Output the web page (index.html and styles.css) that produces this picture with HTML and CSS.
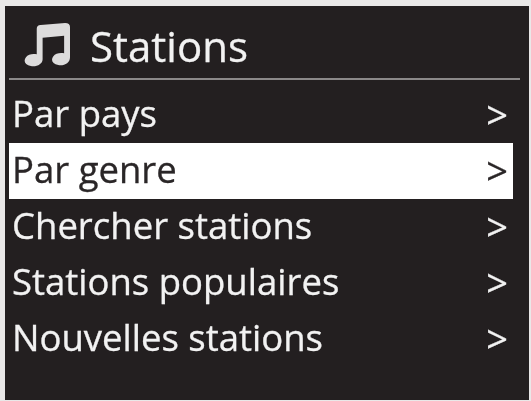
FILE: index.html
```html
<!DOCTYPE html>
<html lang="fr">
<head>
<meta charset="utf-8">
<title>Stations</title>
<link rel="stylesheet" href="styles.css">
</head>
<body>
<main class="screen">
  <header class="header">
    <svg class="note" viewBox="0 0 48 46" aria-hidden="true">
      <path d="M13 7 Q13 3 17 3 L42 1 Q47 1 47 5 L47 36 C47 42 41 45 35 44 C29 43 27 39 30 35 C32 32 37 31 41 32 L41 14 L19 16 L19 38 C19 43 13 46 7 45 C1 44 -1 40 2 36 C4 33 9 32 13 33 Z"/>
    </svg>
    <h1 class="title">Stations</h1>
  </header>
  <ul class="menu">
    <li class="item"><span>Par pays</span><span class="chev">&gt;</span></li>
    <li class="item selected"><span>Par genre</span><span class="chev">&gt;</span></li>
    <li class="item"><span>Chercher stations</span><span class="chev">&gt;</span></li>
    <li class="item"><span>Stations populaires</span><span class="chev">&gt;</span></li>
    <li class="item"><span>Nouvelles stations</span><span class="chev">&gt;</span></li>
  </ul>
</main>
</body>
</html>
```
FILE: styles.css
```css
html, body {
  margin: 0;
  height: 100%;
  background: #e9e8e8;
  overflow: hidden;
}
.screen {
  box-sizing: border-box;
  width: 524px;
  height: 394px;
  margin: 6px 0 0 5px;
  padding: 0 9px 0 4px;
  background: #231f20;
  font-family: "Open Sans", "Noto Sans", sans-serif;
  color: #f2f2f2;
  filter: blur(0.4px);
  -webkit-text-stroke: 0.3px currentColor;
}
.header {
  display: flex;
  align-items: center;
  gap: 19px;
  height: 74px;
  padding-left: 15px;
  border-bottom: 2px solid #8b8989;
  box-sizing: border-box;
}
.note {
  width: 47px;
  height: 45px;
  fill: #dddcdc;
  margin-top: 5px;
}
.title {
  margin: 7px 0 0;
  font-size: 42px;
  font-weight: 400;
  line-height: 1;
}
.menu {
  list-style: none;
  margin: 7px 0 0;
  padding: 0;
}
.item {
  display: flex;
  justify-content: space-between;
  align-items: center;
  height: 56px;
  padding: 0 5px 3px 3px;
  font-size: 36.5px;
  line-height: 1;
  width: 504px;
  box-sizing: border-box;
}
.item.selected {
  background: #fff;
  color: #2a2627;
}
.chev {
  font-size: 38px;
}
```
